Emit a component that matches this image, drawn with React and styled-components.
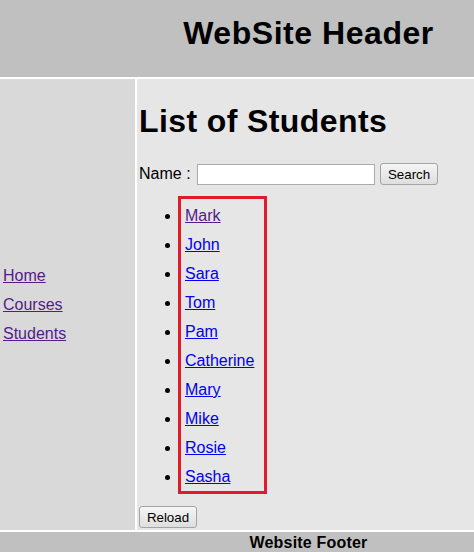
import React from "react";
import styled, { createGlobalStyle } from "styled-components";

const Global = createGlobalStyle`
  html, body { margin: 0; padding: 0; background: #ffffff; }
  body { font-family: "Liberation Sans", Arial, sans-serif; font-size: 16px; color: #000; }
`;

const Page = styled.div`
  display: grid;
  grid-template-columns: 135px 1fr;
  grid-template-rows: 77px auto auto;
  gap: 2px;
  background: #ffffff;
  width: 474px;
`;

const Header = styled.header`
  grid-column: 1 / span 2;
  background: #c0c0c0;
  padding: 15px 0 0 143px;
  box-sizing: border-box;
  text-align: center;
`;

const HeaderTitle = styled.h1`
  margin: 0;
  font-size: 32px;
  line-height: 37px;
  font-weight: bold;
  letter-spacing: 0.55px;
`;

const Nav = styled.nav`
  background: #d9d9d9;
  padding: 2px 2px 2px 3px;
  display: flex;
  flex-direction: column;
  justify-content: center;
`;

const NavLink = styled.a`
  display: block;
  line-height: 29px;
  color: ${(p) => (p.$visited ? "#551a8b" : "#0000ee")};
  text-decoration: underline;
`;

const Main = styled.main`
  background: #e6e6e6;
  padding: 2px;
  display: flex;
  flex-direction: column;
  align-items: flex-start;
`;

const Title = styled.h1`
  margin: 22px 0 21px;
  font-size: 32px;
  line-height: 37px;
  font-weight: bold;
  letter-spacing: 0.4px;
`;

const SearchRow = styled.div`
  display: flex;
  align-items: center;
  height: 24px;
  margin-top: 1px;
`;

const Label = styled.span`
  font-size: 16px;
`;

const TextInput = styled.input`
  box-sizing: border-box;
  width: 178px;
  height: 21px;
  margin-left: 6.5px;
  border: 1px solid #a9abb2;
  background: #ffffff;
  padding: 1px 3px;
  font-family: "Liberation Sans", Arial, sans-serif;
`;

const Button = styled.button`
  box-sizing: border-box;
  width: 58px;
  height: 22px;
  margin-left: ${(p) => p.$ml || "0px"};
  margin-top: ${(p) => p.$mt || "0px"};
  padding: 0;
  border: 1px solid #a4a4a4;
  border-radius: 3px;
  background: linear-gradient(#f5f5f5, #dedede);
  font-family: "Liberation Sans", Arial, sans-serif;
  font-size: 13.33px;
  color: #000;
`;

const StudentList = styled.ul`
  margin: 10px 0 0 39px;
  padding: 2px 0 0 0;
  width: 89px;
  box-sizing: border-box;
  border: 3px solid #e21b2b;
  list-style: disc outside;
`;

const StudentItem = styled.li`
  padding-left: 4px;
  line-height: 29px;
`;

const StudentLink = styled.a`
  color: ${(p) => (p.$visited ? "#551a8b" : "#0000ee")};
  text-decoration: underline;
`;

const Footer = styled.footer`
  grid-column: 1 / span 2;
  background: #c0c0c0;
  padding: 2px 0 2px 143px;
  text-align: center;
  font-weight: bold;
  font-size: 16px;
  line-height: 18px;
  letter-spacing: 0.2px;
`;

const students = ["Mark", "John", "Sara", "Tom", "Pam", "Catherine", "Mary", "Mike", "Rosie", "Sasha"];

export default function App() {
  return (
    <>
      <Global />
      <Page>
        <Header>
          <HeaderTitle>WebSite Header</HeaderTitle>
        </Header>
        <Nav>
          <NavLink href="#" $visited>Home</NavLink>
          <NavLink href="#" $visited>Courses</NavLink>
          <NavLink href="#" $visited>Students</NavLink>
        </Nav>
        <Main>
          <Title>List of Students</Title>
          <SearchRow>
            <Label>Name :</Label>
            <TextInput type="text" />
            <Button $ml="5px">Search</Button>
          </SearchRow>
          <StudentList>
            {students.map((s, i) => (
              <StudentItem key={s}>
                <StudentLink href="#" $visited={i === 0}>{s}</StudentLink>
              </StudentItem>
            ))}
          </StudentList>
          <Button $mt="12px">Reload</Button>
        </Main>
        <Footer>Website Footer</Footer>
      </Page>
    </>
  );
}
